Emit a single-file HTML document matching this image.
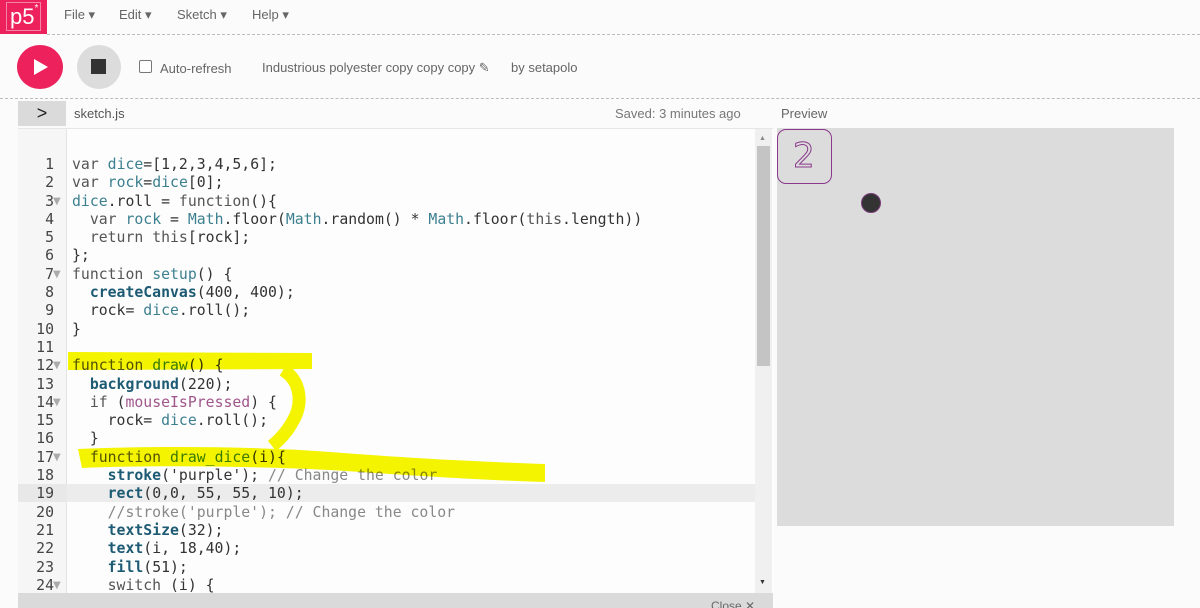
<!DOCTYPE html>
<html><head><meta charset="utf-8"><style>
*{margin:0;padding:0;box-sizing:border-box}
body{width:1200px;height:608px;overflow:hidden;background:#fbfbfb;font-family:"Liberation Sans",sans-serif;position:relative;color:#333}
.abs{position:absolute}
.logo{left:0;top:0;width:47px;height:34px;background:#ed225d}
.logo span{position:absolute;left:6px;top:2px;width:35px;height:29px;border:1px solid rgba(255,255,255,.45);color:#fff;font-size:22px;line-height:27px;padding-left:3px}
.menu{top:7px;font-size:13px;color:#666}
.dot{border-top:1px dashed #bbb;left:47px;right:0;height:0}
.code{left:72px;top:156px;font-family:"DejaVu Sans Mono",monospace;font-size:14.8px;line-height:18.3px;white-space:pre;color:#333}
.nums{left:18px;top:156px;width:36px;text-align:right;font-family:"DejaVu Sans Mono",monospace;font-size:14.8px;line-height:18.3px;white-space:pre;color:#444}
.k{color:#555}.v{color:#3c7f8f}.b{color:#1d5a73;font-weight:bold}.p{color:#a0558a}.c{color:#888}
.fold{left:53px;top:156px;font-size:10px;line-height:18.3px;color:#aaa;white-space:pre;font-family:"DejaVu Sans",sans-serif}
</style></head><body>
<div class="abs logo"><span>p5<sup style="font-size:10px;vertical-align:top;line-height:12px">*</sup></span></div>
<div class="abs menu" style="left:64px">File ▾</div>
<div class="abs menu" style="left:119px">Edit ▾</div>
<div class="abs menu" style="left:177px">Sketch ▾</div>
<div class="abs menu" style="left:252px">Help ▾</div>
<div class="abs dot" style="top:34px"></div>
<div class="abs" style="left:17px;top:45px;width:46px;height:44px;border-radius:50%;background:#ed225d"></div>
<div class="abs" style="left:34px;top:59px;width:0;height:0;border-left:14px solid #fff;border-top:8px solid transparent;border-bottom:8px solid transparent"></div>
<div class="abs" style="left:77px;top:45px;width:44px;height:44px;border-radius:50%;background:#dcdcdc"></div>
<div class="abs" style="left:91px;top:59px;width:15px;height:15px;background:#333"></div>
<div class="abs" style="left:139px;top:60px;width:13px;height:13px;border:1px solid #777;border-radius:2px;background:#fff"></div>
<div class="abs" style="left:160px;top:61px;font-size:13px;color:#666">Auto-refresh</div>
<div class="abs" style="left:262px;top:60px;font-size:13px;color:#666">Industrious polyester copy copy copy ✎</div>
<div class="abs" style="left:511px;top:60px;font-size:13px;color:#666">by setapolo</div>
<div class="abs dot" style="top:98px;left:0"></div>
<div class="abs" style="left:18px;top:101px;width:48px;height:25px;background:#dadada;text-align:center;font-size:18px;line-height:24px;color:#222">&gt;</div>
<div class="abs" style="left:74px;top:106px;font-size:13px;color:#555">sketch.js</div>
<div class="abs" style="left:615px;top:106px;font-size:13px;color:#777">Saved: 3 minutes ago</div>
<div class="abs" style="left:781px;top:106px;font-size:13px;color:#666">Preview</div>
<div class="abs" style="left:18px;top:128px;width:755px;height:466px;background:#fdfdfd;border-top:1px solid #e6e6e6;border-left:1px solid #e6e6e6"></div>
<div class="abs" style="left:18px;top:129px;width:49px;height:465px;background:#f6f6f6;border-right:1px solid #e4e4e4"></div>
<div class="abs" style="left:67px;top:484px;width:689px;height:18px;background:#ececec"></div>
<div class="abs" style="left:18px;top:484px;width:49px;height:18px;background:#e8e8e8"></div>
<div class="abs" style="left:755px;top:129px;width:17px;height:464px;background:#f0f0f0"></div>
<div class="abs" style="left:757px;top:146px;width:13px;height:220px;background:#c4c4c4"></div>
<div class="abs" style="left:759px;top:135px;font-size:7px;color:#888">▲</div>
<div class="abs" style="left:759px;top:579px;font-size:7px;color:#333">▼</div>
<div class="abs" style="left:18px;top:593px;width:755px;height:15px;background:#dadada;overflow:hidden"><div style="position:absolute;left:693px;top:6px;font-size:12px;color:#666">Close ✕</div></div>
<div class="abs" style="left:777px;top:128px;width:397px;height:398px;background:#dcdcdc"></div>
<div class="abs" style="left:777px;top:129px;width:55px;height:55px;border:1.5px solid #8b3a8b;border-radius:9px"></div>
<div class="abs" style="left:793px;top:136px;font-size:34px;color:#dcdcdc;-webkit-text-stroke:1px #8b3a8b;font-family:'DejaVu Sans',sans-serif">2</div>
<div class="abs" style="left:861px;top:193px;width:20px;height:20px;border-radius:50%;background:#333;border:1px solid #7a3a7a"></div>
<div class="abs nums">1
2
3
4
5
6
7
8
9
10
11
12
13
14
15
16
17
18
19
20
21
22
23
24</div>
<div class="abs fold">

▼



▼




▼

▼


▼






▼</div>
<div class="abs code"><span class="k">var</span> <span class="v">dice</span>=[1,2,3,4,5,6];
<span class="k">var</span> <span class="v">rock</span>=<span class="v">dice</span>[0];
<span class="v">dice</span>.roll = <span class="k">function</span>(){
  <span class="k">var</span> <span class="v">rock</span> = <span class="v">Math</span>.floor(<span class="v">Math</span>.random() * <span class="v">Math</span>.floor(<span class="k">this</span>.length))
  <span class="k">return</span> <span class="k">this</span>[rock];
};
<span class="k">function</span> <span class="v">setup</span>() {
  <span class="b">createCanvas</span>(400, 400);
  rock= <span class="v">dice</span>.roll();
}

<span class="k">function</span> <span class="v">draw</span>() {
  <span class="b">background</span>(220);
  <span class="k">if</span> (<span class="p">mouseIsPressed</span>) {
    rock= <span class="v">dice</span>.roll();
  }
  <span class="k">function</span> <span class="v">draw_dice</span>(i){
    <span class="b">stroke</span>('purple'); <span class="c">// Change the color</span>
    <span class="b">rect</span>(0,0, 55, 55, 10);
    <span class="c">//stroke('purple'); // Change the color</span>
    <span class="b">textSize</span>(32);
    <span class="b">text</span>(i, 18,40);
    <span class="b">fill</span>(51);
    <span class="k">switch</span> (i) {</div>
<svg class="abs" style="left:0;top:0;mix-blend-mode:multiply" width="1200" height="608">
<path d="M68 352 L312 353 L312 369 L68 370 Z" fill="#f6f600"/>
<path d="M283 370 C300 380 302 400 296 415 C290 428 282 438 272 446" stroke="#f6f600" stroke-width="13" fill="none"/>
<path d="M78 449 C150 446 250 446 330 452 C420 459 490 462 545 464 L545 482 C480 480 420 476 330 470 C250 466 150 465 82 468 Z" fill="#f6f600"/>
</svg>
</body></html>
